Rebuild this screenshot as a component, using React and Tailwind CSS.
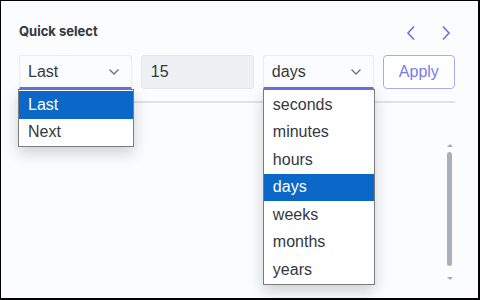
import React from 'react';

const units = ['seconds', 'minutes', 'hours', 'days', 'weeks', 'months', 'years'];

const Chevron = () => (
  <svg width="12" height="8" viewBox="0 0 12 8" fill="none" stroke="#69707d" strokeWidth="1.3">
    <path d="M1.5 1.5 L6 6 L10.5 1.5" />
  </svg>
);

const NavArrow = ({ dir }) => (
  <svg width="10" height="16" viewBox="0 0 10 16" fill="none" stroke="#6b70e2" strokeWidth="1.6">
    {dir === 'left' ? <path d="M8 1.5 L2 8 L8 14.5" /> : <path d="M2 1.5 L8 8 L2 14.5" />}
  </svg>
);

const Menu = ({ items, selected, className }) => (
  <div className={`absolute top-full pt-[1px] bg-white border border-[#7b7b7b] shadow-[0_6px_14px_rgba(0,0,0,0.18)] z-10 ${className}`}>
    {items.map((item) => (
      <div
        key={item}
        className={`h-[27.5px] flex items-center pl-[9px] text-[16px] ${
          item === selected ? 'bg-[#0b67c8] text-white' : 'text-[#343741]'
        }`}
      >
        {item}
      </div>
    ))}
  </div>
);

const SelectBox = ({ value, width, children }) => (
  <div className={`relative ${width}`}>
    <div className="h-[34px] flex items-center justify-between pl-[8px] pr-[11px] bg-[#fbfcfd] border border-[#e8ebef] border-b-2 border-b-[#6c70e0] rounded-t-[3px] text-[16px] text-[#343741]">
      <span>{value}</span>
      <Chevron />
    </div>
    {children}
  </div>
);

export default function App() {
  return (
    <div className="w-[480px] h-[300px] bg-[#fbfcfd] border-t border-l border-r-2 border-b-2 border-black font-['Liberation_Sans',Arial,sans-serif] overflow-hidden">
      <div className="pl-[18px] pr-[23px] pt-[22px]">
        <div className="flex items-center justify-between h-[18px]">
          <span className="font-['Inter',sans-serif] font-bold text-[13px] text-[#343741]">Quick select</span>
          <div className="flex items-center gap-[25px] mr-[4px] mt-[2px]">
            <NavArrow dir="left" />
            <NavArrow dir="right" />
          </div>
        </div>

        <div className="flex gap-[9px] mt-[14px]">
          <SelectBox value="Last" width="w-[114px]">
            <Menu items={['Last', 'Next']} selected="Last" className="-left-[1px] w-[116px]" />
          </SelectBox>
          <div className="w-[114px] h-[34px] flex items-center pl-[9px] bg-[#eef1f4] border border-[#e3e6eb] rounded-[3px] text-[16px] text-[#343741]">
            15
          </div>
          <SelectBox value="days" width="w-[112px]">
            <Menu items={units} selected="days" className="left-0 w-[112px]" />
          </SelectBox>
          <button className="w-[73px] h-[34px] border border-[#a7abf4] rounded-[4px] bg-white text-[16px] text-[#777ce6]">
            Apply
          </button>
        </div>

        <div className="mt-[12px] h-[2px] bg-[#dfe2e7]" />

        <div className="flex justify-end pr-[2px] mt-[41px]">
          <div className="flex flex-col items-center w-[7px]">
            <div className="w-0 h-0 border-l-[3px] border-r-[3px] border-b-[3px] border-l-transparent border-r-transparent border-b-[#a4a9b2]" />
            <div className="mt-[5px] w-[5px] h-[114px] rounded-full bg-[#a9b0ba]" />
            <div className="mt-[11px] w-0 h-0 border-l-[3px] border-r-[3px] border-t-[3px] border-l-transparent border-r-transparent border-t-[#a4a9b2]" />
          </div>
        </div>
      </div>
    </div>
  );
}
